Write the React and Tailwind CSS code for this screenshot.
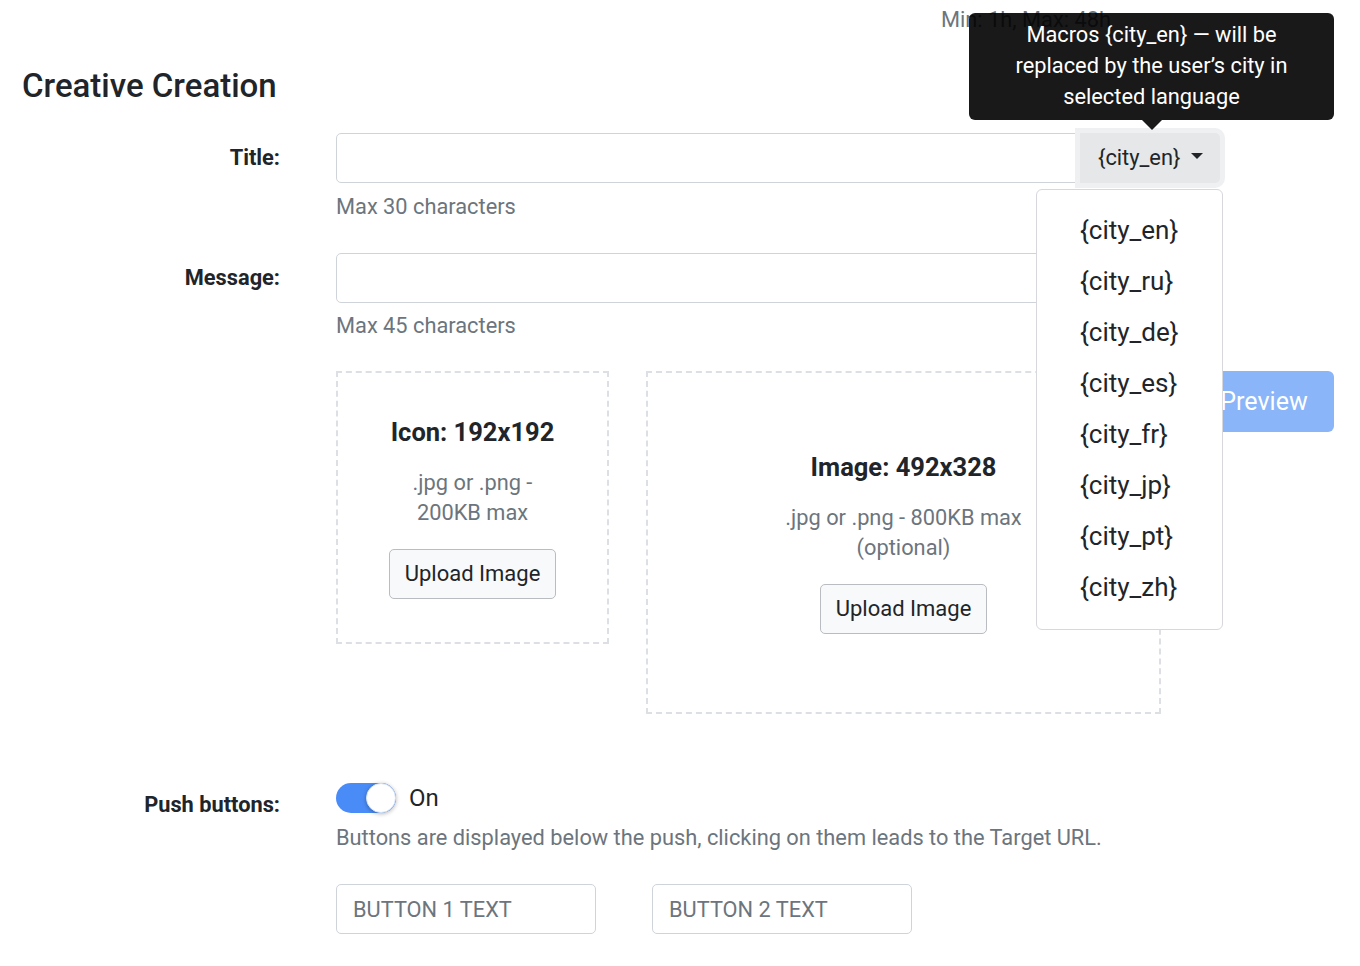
import React from 'react';

const MACROS = ['{city_en}', '{city_ru}', '{city_de}', '{city_es}', '{city_fr}', '{city_jp}', '{city_pt}', '{city_zh}'];

// Upload box (icon / image)
const UploadBox = ({ title, lines, className }) => (
  <div className={`flex flex-col items-center justify-center border-2 border-dashed border-[#dcdfe3] ${className}`}>
    <div className="text-[25.5px] leading-[30px] font-bold text-[#212529]">{title}</div>
    <div className="mt-[21px] text-center text-[21.8px] leading-[30px] text-[#6c757d]">
      {lines.map((l) => (
        <div key={l}>{l}</div>
      ))}
    </div>
    <button className="mt-[21px] w-[167px] h-[50px] rounded-[5px] border border-[#b9bcc0] bg-[#f8f9fa] text-[22px] text-[#212529]">
      Upload Image
    </button>
  </div>
);

const App = () => {
  return (
    <div className="relative w-[1360px] h-[966px] overflow-hidden bg-white font-['Roboto',sans-serif] text-[#212529]">
      <div className="pl-[941px] pt-[7px] text-[21.8px] leading-[26px] text-[#6c757d]">Min: 1h, Max: 48h</div>

      <h2 className="ml-[22px] mt-[34px] text-[33px] leading-[38px] font-medium">Creative Creation</h2>

      {/* Title */}
      <div className="mt-[28px] flex items-start">
        <label className="w-[280px] text-right text-[21.8px] leading-[50px] font-bold">Title:</label>
        <div className="ml-[56px] w-[884px]">
          <div className="flex h-[50px]">
            <input className="flex-1 h-[50px] rounded-l-[5px] border border-[#ced4da] outline-none" />
            <div className="relative z-10 flex w-[140px] h-[50px] items-center gap-[11px] rounded-r-[5px] bg-[#e6e7e8] pl-[18px] text-[21.8px] shadow-[0_0_0_5px_#eff0f1]">
              <span>{'{city_en}'}</span>
              <span className="mb-[4px] border-x-[6px] border-t-[6px] border-x-transparent border-t-[#212529]" />
            </div>
          </div>
          <div className="mt-[11px] text-[21.8px] leading-[26px] text-[#6c757d]">Max 30 characters</div>
        </div>
      </div>

      {/* Message */}
      <div className="mt-[33px] flex items-start">
        <label className="w-[280px] text-right text-[21.8px] leading-[50px] font-bold">Message:</label>
        <div className="ml-[56px] w-[884px]">
          <input className="w-full h-[50px] rounded-[5px] border border-[#ced4da] outline-none" />
          <div className="mt-[10px] text-[21.8px] leading-[26px] text-[#6c757d]">Max 45 characters</div>
        </div>
      </div>

      {/* Uploads + preview */}
      <div className="mt-[32px] ml-[336px] mr-[26px] flex items-start">
        <UploadBox title="Icon: 192x192" lines={['.jpg or .png -', '200KB max']} className="w-[273px] h-[273px]" />
        <UploadBox title="Image: 492x328" lines={['.jpg or .png - 800KB max', '(optional)']} className="ml-[37px] w-[515px] h-[343px]" />
        <button className="ml-auto w-[142px] h-[61px] rounded-[6px] bg-[#8ab5f8] pl-[2px] text-[25px] text-white">Preview</button>
      </div>

      {/* Push buttons */}
      <div className="mt-[69px] flex items-start">
        <label className="w-[280px] pt-[9px] text-right text-[21.8px] leading-[26px] font-bold">Push buttons:</label>
        <div className="ml-[56px]">
          <div className="flex h-[30px] items-center">
            <div className="relative w-[60px] h-[30px] rounded-full bg-[#4a8cf7]">
              <div className="absolute right-0 top-0 w-[30px] h-[30px] rounded-full border border-[#d6e4fb] bg-white shadow-[0_1px_4px_rgba(0,0,0,0.3)]" />
            </div>
            <span className="ml-[13px] text-[24px]">On</span>
          </div>
          <div className="mt-[12px] text-[21.8px] leading-[26px] text-[#6c757d]">
            Buttons are displayed below the push, clicking on them leads to the Target URL.
          </div>
          <div className="mt-[33px] flex gap-[56px]">
            <input placeholder="BUTTON 1 TEXT" className="w-[260px] h-[50px] rounded-[5px] border border-[#ced4da] pl-[16px] text-[21.8px] placeholder:text-[#6c757d] outline-none" />
            <input placeholder="BUTTON 2 TEXT" className="w-[260px] h-[50px] rounded-[5px] border border-[#ced4da] pl-[16px] text-[21.8px] placeholder:text-[#6c757d] outline-none" />
          </div>
        </div>
      </div>

      {/* Tooltip */}
      <div className="absolute left-[969px] top-[13px] z-30 w-[365px] h-[107px] rounded-[6px] bg-black/90 pt-[6px] text-center text-[21.8px] leading-[31px] text-white">
        Macros {'{city_en}'} — will be
        <br />
        replaced by the user’s city in
        <br />
        selected language
        <div className="absolute left-[173px] top-[107px] border-x-[10px] border-t-[10px] border-x-transparent border-t-black/90" />
      </div>

      {/* Dropdown menu */}
      <div className="absolute left-[1036px] top-[189px] z-20 w-[187px] h-[441px] rounded-[6px] border border-[#d6d8db] bg-white py-[15px]">
        {MACROS.map((m) => (
          <div key={m} className="flex h-[51px] items-center pl-[43px] text-[26px]">{m}</div>
        ))}
      </div>
    </div>
  );
};

export default App;
